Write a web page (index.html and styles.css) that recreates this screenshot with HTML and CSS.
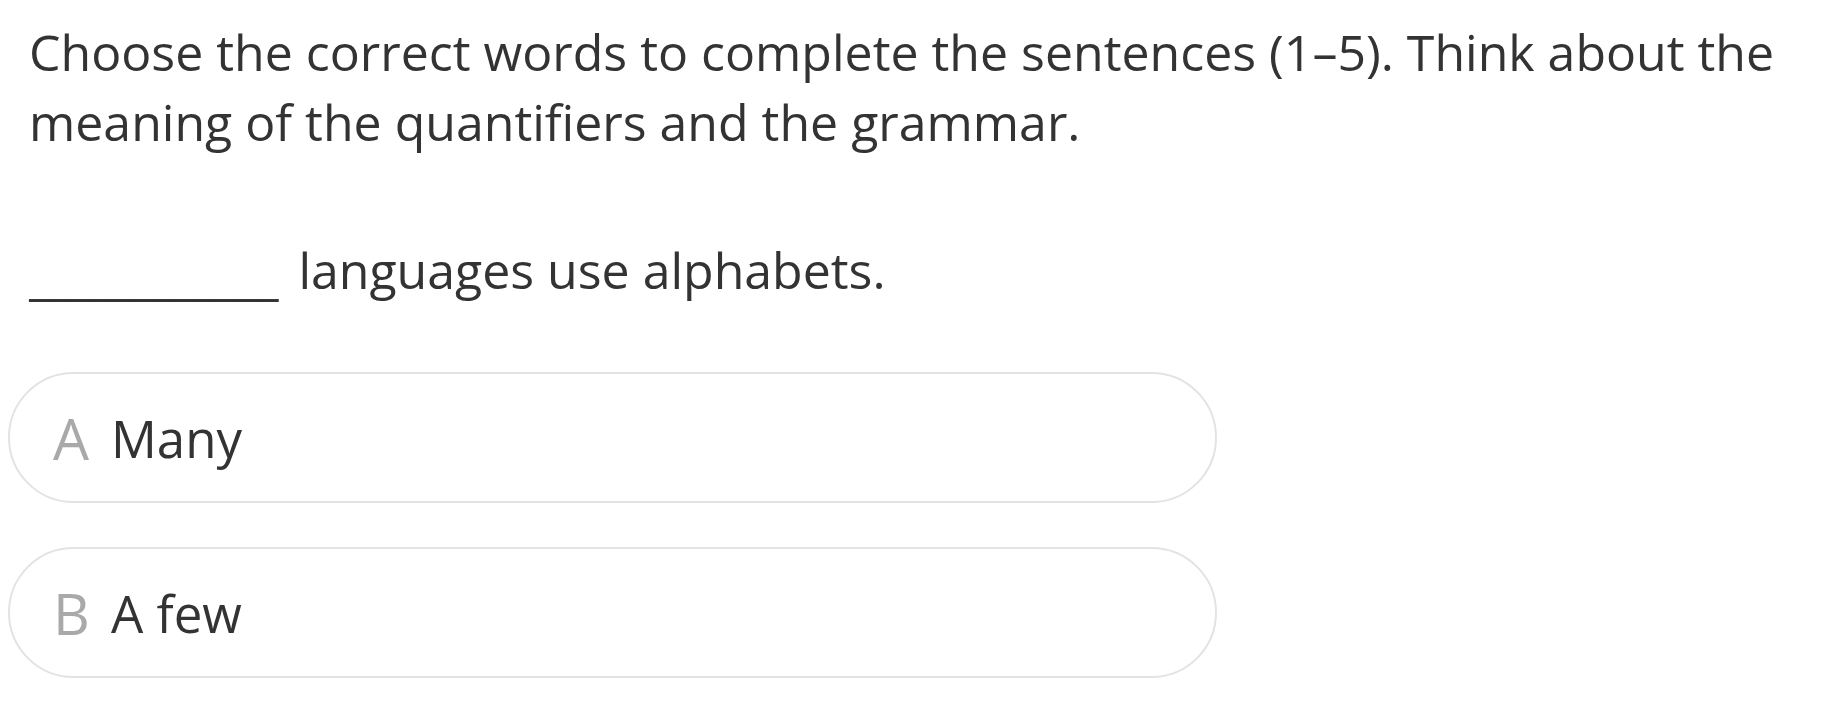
FILE: index.html
```html
<!DOCTYPE html>
<html lang="en">
<head>
<meta charset="utf-8">
<title>Quantifiers</title>
<link rel="stylesheet" href="styles.css">
</head>
<body>
<main class="page">
  <p class="instructions">Choose the correct words to complete the sentences (1–5). Think about the meaning of the quantifiers and the grammar.</p>
  <p class="question"><span class="blank">____________</span> languages use alphabets.</p>
  <ul class="options">
    <li class="option"><span class="letter">A</span><span class="answer">Many</span></li>
    <li class="option"><span class="letter">B</span><span class="answer">A few</span></li>
  </ul>
</main>
</body>
</html>
```
FILE: styles.css
```css
html, body {
  margin: 0;
  padding: 0;
  background: #ffffff;
}

body {
  font-family: "Open Sans", "Noto Sans", sans-serif;
  color: #333333;
}

.page {
  padding: 17px 8px 0 8px;
}

.instructions {
  margin: 0;
  padding: 0 21px;
  font-size: 50px;
  line-height: 70px;
}

.question {
  margin: 78px 0 0 0;
  padding: 0 21px;
  font-size: 50px;
  line-height: 70px;
}

.blank {
  letter-spacing: -1.2px;
  margin-right: 8px;
  vertical-align: -6px;
}

.options {
  list-style: none;
  margin: 61px 0 0 0;
  padding: 0;
  display: flex;
  flex-direction: column;
  gap: 44px;
}

.option {
  box-sizing: border-box;
  width: 1209px;
  height: 131px;
  border: 2px solid #e3e3e3;
  border-radius: 66px;
  display: flex;
  align-items: center;
  padding-left: 43px;
  font-size: 51px;
}

.letter {
  width: 58px;
  font-size: 57px;
  color: #a9a9a9;
}

.answer {
  color: #333333;
}
```
